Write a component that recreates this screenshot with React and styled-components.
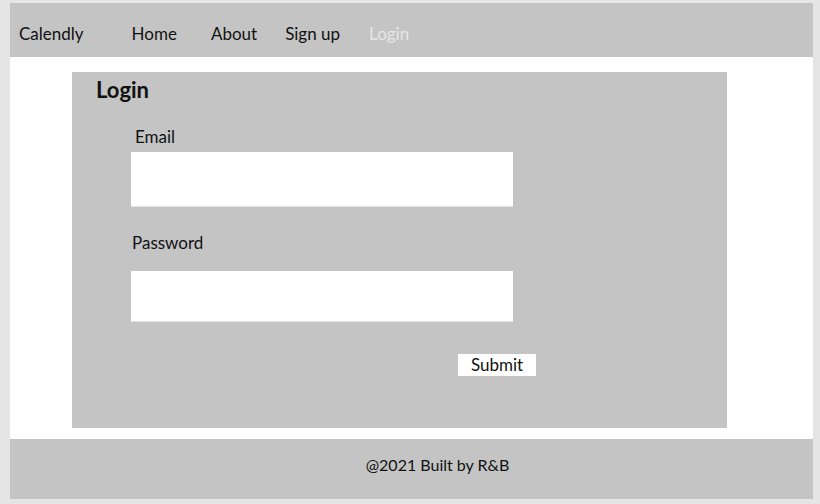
import React from "react";
import styled, { createGlobalStyle } from "styled-components";

const GlobalStyle = createGlobalStyle`
  * { box-sizing: border-box; }
  body {
    margin: 0;
    background: #e5e5e5;
    font-family: Lato, "Open Sans", sans-serif;
    color: #111;
  }
`;

const Page = styled.div`
  margin: 3px 7px 0 10px;
  background: #fff;
`;

const Nav = styled.nav`
  height: 54px;
  background: #c4c4c4;
  display: flex;
  align-items: center;
  padding: 6px 0 0 9px;
  font-size: 17px;
`;

const Brand = styled.span`
  margin-right: 48px;
`;

const NavLink = styled.a`
  color: ${(p) => (p.$active ? "#e6e6e6" : "#111")};
  text-decoration: none;
  margin-right: ${(p) => p.$gap || 29}px;
`;

const Main = styled.main`
  padding: 15px 0 11px 62px;
`;

const Card = styled.section`
  width: 655px;
  height: 356px;
  background: #c4c4c4;
  padding: 5px 0 0 24px;
`;

const Title = styled.h1`
  margin: 0 0 24px;
  font-size: 22px;
  line-height: 26px;
  font-weight: 700;
`;

const Form = styled.form`
  display: flex;
  flex-direction: column;
  align-items: flex-start;
  padding-left: 35px;
`;

const Label = styled.label`
  font-size: 17px;
  line-height: 20px;
  margin-left: ${(p) => p.$indent || 0}px;
  margin-bottom: ${(p) => p.$gap}px;
`;

const Input = styled.input`
  width: 382px;
  height: ${(p) => p.$h}px;
  border: none;
  border-bottom: 1px solid #e2e2e2;
  background: #fff;
  margin-bottom: ${(p) => p.$gap}px;
  outline: none;
`;

const Submit = styled.button`
  align-self: flex-start;
  margin-left: 327px;
  width: 78px;
  height: 22px;
  border: none;
  background: #fff;
  font-family: inherit;
  font-size: 17px;
  line-height: 22px;
  padding: 0;
  color: #111;
`;

const Footer = styled.footer`
  height: 60px;
  background: #c4c4c4;
  display: flex;
  align-items: center;
  justify-content: center;
  padding: 0 0 10px 52px;
  font-size: 16px;
`;

export default function App() {
  return (
    <>
      <GlobalStyle />
      <Page>
        <Nav>
          <Brand>Calendly</Brand>
          <NavLink href="#" $gap={34}>Home</NavLink>
          <NavLink href="#" $gap={28}>About</NavLink>
          <NavLink href="#">Sign up</NavLink>
          <NavLink href="#" $active>Login</NavLink>
        </Nav>
        <Main>
          <Card>
            <Title>Login</Title>
            <Form onSubmit={(e) => e.preventDefault()}>
              <Label $indent={4} $gap={5}>Email</Label>
              <Input type="email" $h={55} $gap={26} />
              <Label $indent={1} $gap={18}>Password</Label>
              <Input type="password" $h={51} $gap={32} />
              <Submit type="submit">Submit</Submit>
            </Form>
          </Card>
        </Main>
        <Footer>@2021 Built by R&amp;B</Footer>
      </Page>
    </>
  );
}
